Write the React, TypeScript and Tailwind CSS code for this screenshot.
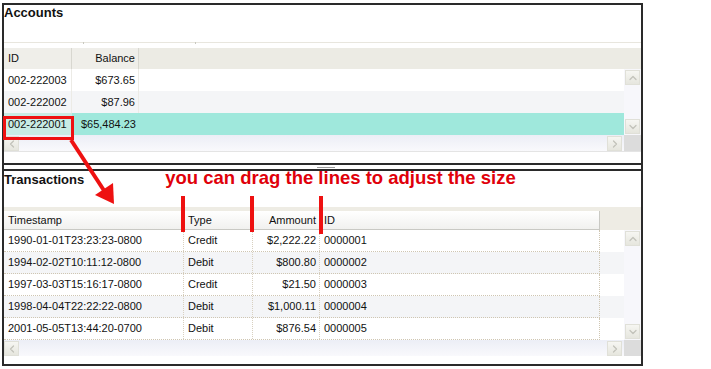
import { ChevronUp, ChevronDown, ChevronLeft, ChevronRight } from 'lucide-react'

const accounts = [
  { id: '002-222003', balance: '$673.65' },
  { id: '002-222002', balance: '$87.96' },
  { id: '002-222001', balance: '$65,484.23' },
]

const transactions = [
  { ts: '1990-01-01T23:23:23-0800', type: 'Credit', amount: '$2,222.22', id: '0000001' },
  { ts: '1994-02-02T10:11:12-0800', type: 'Debit', amount: '$800.80', id: '0000002' },
  { ts: '1997-03-03T15:16:17-0800', type: 'Credit', amount: '$21.50', id: '0000003' },
  { ts: '1998-04-04T22:22:22-0800', type: 'Debit', amount: '$1,000.11', id: '0000004' },
  { ts: '2001-05-05T13:44:20-0700', type: 'Debit', amount: '$876.54', id: '0000005' },
]

function ScrollBtn({ dir }: { dir: 'up' | 'down' | 'left' | 'right' }) {
  const Icon = { up: ChevronUp, down: ChevronDown, left: ChevronLeft, right: ChevronRight }[dir]
  return (
    <div className="flex h-[15px] w-[15px] items-center justify-center border border-[#e0e0d8] bg-gradient-to-b from-[#f6f6f2] to-[#e6e6de]">
      <Icon size={12} strokeWidth={2.5} className="text-[#c2c2ba]" />
    </div>
  )
}

function HScroll() {
  return (
    <div className="flex h-[16px]">
      <div className="flex flex-1 items-end justify-between bg-gradient-to-b from-[#eceef6] to-[#f9f9fc] pr-[2px]">
        <ScrollBtn dir="left" />
        <ScrollBtn dir="right" />
      </div>
      <div className="w-[17px] bg-[#dcdcdc]" />
    </div>
  )
}

export default function App() {
  return (
    <div className="relative h-[369px] w-[711px] bg-white font-['Liberation_Sans',Arial,sans-serif] text-[11px] text-[#111]">
      <div className="ml-[2px] mt-[3px] flex w-[641px] flex-col border-2 border-[#2a2a2a]">
        {/* Accounts */}
        <div className="flex h-[160px] flex-col border-b-2 border-[#2a2a2a]">
          <div className="h-[37px] text-[13px] font-bold leading-[15px]">Accounts</div>
          <div className="flex h-px bg-[#e8e6de]">
            <div className="w-[79px]" />
            <div className="h-[2px] w-px bg-[#c8c8c0]" />
            <div className="w-[111px]" />
            <div className="h-[2px] w-px bg-[#c8c8c0]" />
          </div>
          <div className="h-[5px]" />
          <div className="flex h-[21px] bg-[#ecebe4]">
            <div className="flex w-[68px] items-center border-r border-[#d8d7d0] bg-[#efeee9] pl-1">ID</div>
            <div className="flex w-[67px] items-center justify-end border-r border-[#d8d7d0] bg-[#efeee9] pr-[3px]">Balance</div>
          </div>
          <div className="flex">
            <div className="flex flex-1 flex-col">
              {accounts.map((a, i) => (
                <div
                  key={a.id}
                  className={
                    'flex h-[22px] items-center ' +
                    (i === 2 ? 'bg-[#9fe8dc]' : i === 1 ? 'bg-[#f4f5f7]' : 'bg-white')
                  }
                >
                  <div className={'flex h-full w-[68px] items-center pl-1 ' + (i === 2 ? 'bg-[#c8ebe4]' : 'border-r border-[#ecebe6]')}>
                    {a.id}
                  </div>
                  <div className={'flex h-full w-[67px] items-center justify-end pr-[3px] ' + (i === 2 ? '' : 'border-r border-[#ecebe6]')}>
                    {a.balance}
                  </div>
                </div>
              ))}
            </div>
            <div className="flex w-[17px] flex-col items-center justify-between bg-[#f7f7fb] py-px">
              <ScrollBtn dir="up" />
              <ScrollBtn dir="down" />
            </div>
          </div>
          <HScroll />
          <div className="h-px bg-[#e4e4e4]" />
        </div>

        {/* splitter */}
        <div className="flex h-[4px] flex-col items-center justify-center gap-px pl-[6px]">
          <div className="h-px w-[18px] bg-[#9a9a9a]" />
        </div>

        {/* Transactions */}
        <div className="flex h-[195px] flex-col border-t-2 border-[#2a2a2a]">
          <div className="flex h-[36px] items-baseline leading-[15px]">
            <span className="text-[13px] font-bold">Transactions</span>
            <span className="ml-[81px] text-[18.5px] font-bold leading-[14px] text-[#e0000a]">
              you can drag the lines to adjust the size
            </span>
          </div>
          <div className="flex h-[23px] items-end bg-[#eeece4]">
            <div className="flex h-[19px] w-[596px] border-b border-[#c9c9c4] bg-gradient-to-b from-white to-[#f1f1ef]">
              <div className="flex w-[180px] items-center border-r border-[#dcdcd6] pl-1">Timestamp</div>
              <div className="flex w-[69px] items-center border-r border-[#dcdcd6] pl-1">Type</div>
              <div className="flex w-[67px] items-center justify-end border-r border-[#dcdcd6] pr-[3px]">Ammount</div>
              <div className="flex flex-1 items-center border-r border-[#c9c9c4] pl-1">ID</div>
            </div>
          </div>
          <div className="flex">
            <div className="flex flex-1 flex-col">
              {transactions.map((t, i) => (
                <div key={t.id} className={'flex h-[22px] ' + (i % 2 ? 'bg-[#f4f5f7]' : 'bg-white')}>
                  <div className="flex w-[596px] border-b border-r border-dotted border-[#cfc6b2]">
                    <div className="flex w-[180px] items-center border-r border-dotted border-[#d8d0c0] pl-1">{t.ts}</div>
                    <div className="flex w-[69px] items-center border-r border-dotted border-[#d8d0c0] pl-1">{t.type}</div>
                    <div className="flex w-[67px] items-center justify-end border-r border-dotted border-[#d8d0c0] pr-[3px]">{t.amount}</div>
                    <div className="flex flex-1 items-center pl-1">{t.id}</div>
                  </div>
                </div>
              ))}
            </div>
            <div className="flex w-[17px] flex-col items-center justify-between bg-[#f7f7fb] py-px">
              <ScrollBtn dir="up" />
              <ScrollBtn dir="down" />
            </div>
          </div>
          <HScroll />
        </div>
      </div>

      {/* annotations */}
      <div className="absolute left-[3px] top-[113px] h-[24px] w-[71px] border-[3px] border-[#ee1111]" />
      <div className="absolute left-[181px] top-[193px] h-[36px] w-[4px] bg-[#ee1111]" />
      <div className="absolute left-[250px] top-[193px] h-[36px] w-[4px] bg-[#ee1111]" />
      <div className="absolute left-[319px] top-[193px] h-[38px] w-[4px] bg-[#ee1111]" />
      <svg className="absolute left-0 top-0" width="711" height="369" viewBox="0 0 711 369">
        <line x1="71" y1="137" x2="105" y2="189" stroke="#ee1111" strokeWidth="4" />
        <polygon points="114,201 95,192 113,180" fill="#ee1111" />
      </svg>
    </div>
  )
}
